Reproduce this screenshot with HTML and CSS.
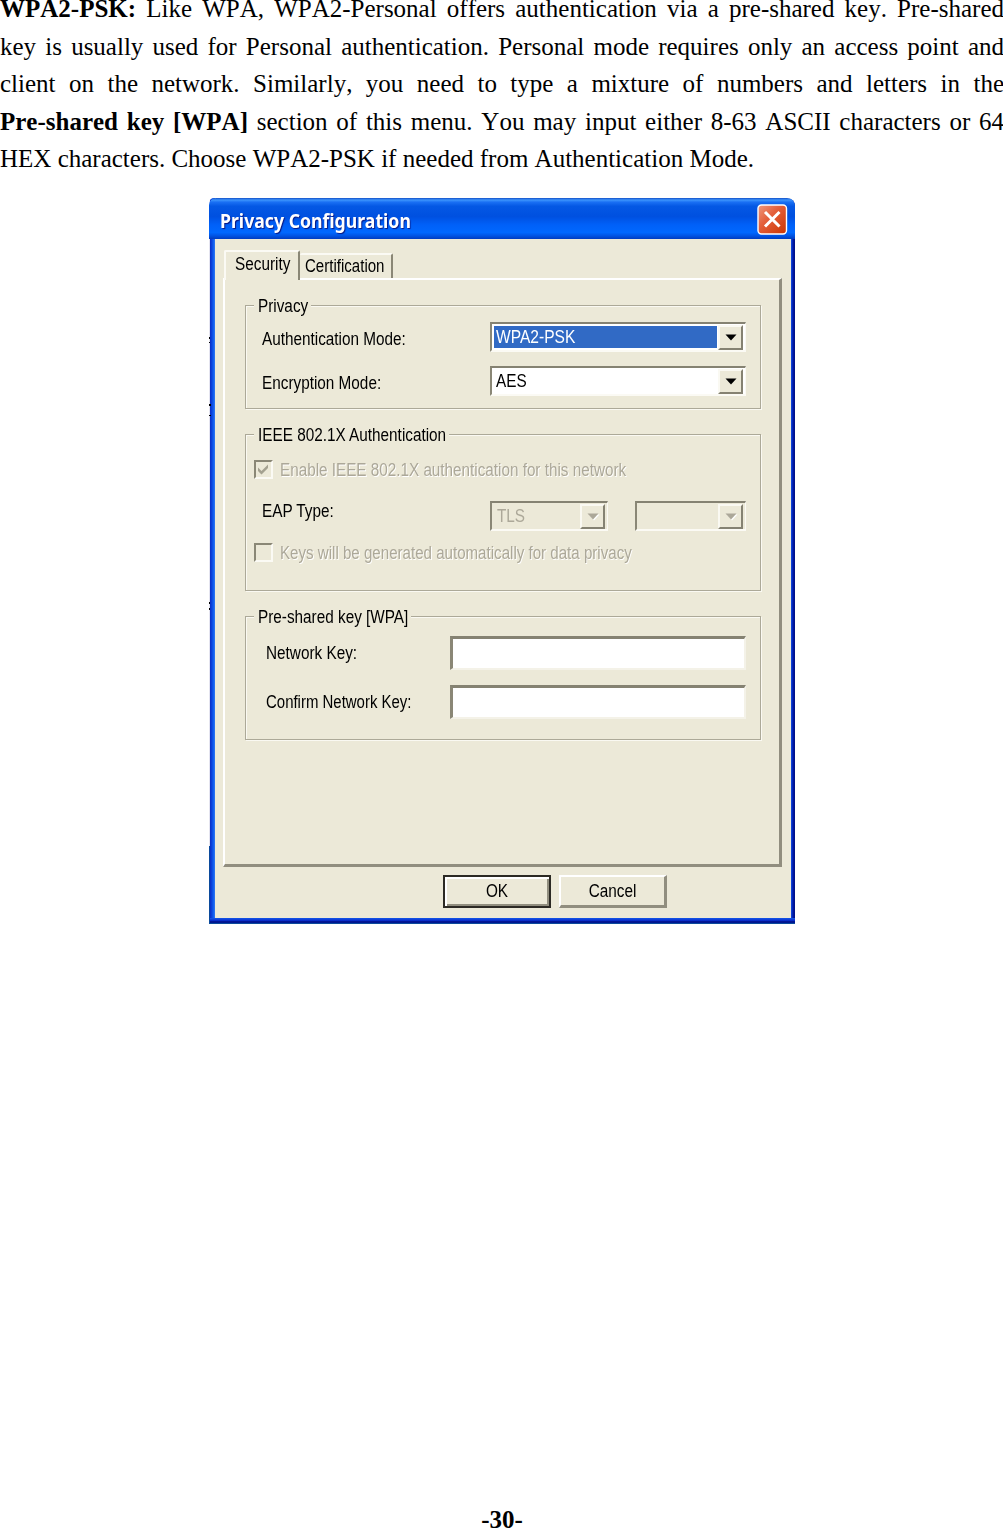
FILE: index.html
```
<!DOCTYPE html>
<html lang="en">
<head>
  <meta charset="UTF-8" />
  <meta name="viewport" content="width=device-width, initial-scale=1.0"/>
  <title>WPA2-PSK</title>
  <link rel="stylesheet" href="styles.css">
</head>
<body>
  <p class="intro">
    <span class="line"><b>WPA2-PSK:</b> Like WPA, WPA2-Personal offers authentication via a pre-shared key. Pre-shared</span>
    <span class="line">key is usually used for Personal authentication. Personal mode requires only an access point and</span>
    <span class="line">client on the network. Similarly, you need to type a mixture of numbers and letters in the</span>
    <span class="line"><b>Pre-shared key [WPA]</b> section of this menu. You may input either 8-63 ASCII characters or 64</span>
    <span class="line last">HEX characters. Choose WPA2-PSK if needed from Authentication Mode.</span>
  </p>

  <div class="dialog">
    <div class="titlebar">
      <span class="title">Privacy Configuration</span>
      <div class="close">
        <svg width="31" height="31" viewBox="0 0 31 31">
          <defs>
            <linearGradient id="red" x1="0" y1="0" x2="1" y2="1">
              <stop offset="0" stop-color="#ee9a80"/>
              <stop offset="0.4" stop-color="#e4603c"/>
              <stop offset="1" stop-color="#cc3400"/>
            </linearGradient>
          </defs>
          <rect x="1" y="1" width="28.5" height="29" rx="3.5" fill="url(#red)" stroke="#fff" stroke-width="1.4"/>
          <path d="M8 8 L22.5 22.5 M22.5 8 L8 22.5" stroke="#fff" stroke-width="3"/>
        </svg>
      </div>
    </div>

    <div class="content">
      <div class="tabs">
        <div class="tab active"><span class="t">Security</span></div>
        <div class="tab"><span class="t t-cert">Certification</span></div>
      </div>

      <div class="panel">
        <div class="group privacy">
          <div class="legend l-privacy"><span class="t">Privacy</span></div>
          <div class="row">
            <label class="t">Authentication Mode:</label>
            <div class="combo selected"><div class="value"><span class="t t-wpa2">WPA2-PSK</span></div><div class="arrow"><svg width="12" height="7"><path d="M0.5 0.5h11L6 6.5z"/></svg></div></div>
          </div>
          <div class="row">
            <label class="t">Encryption Mode:</label>
            <div class="combo"><div class="value"><span class="t">AES</span></div><div class="arrow"><svg width="12" height="7"><path d="M0.5 0.5h11L6 6.5z"/></svg></div></div>
          </div>
        </div>

        <div class="group ieee">
          <div class="legend l-ieee"><span class="t">IEEE 802.1X Authentication</span></div>
          <div class="check">
            <div class="box"><svg width="14" height="14"><path d="M2 5.5 L5.5 9 L12 2.5 V6 L5.5 12.5 L2 9z"/></svg></div>
            <span class="t t-enable">Enable IEEE 802.1X authentication for this network</span>
          </div>
          <div class="row eap">
            <label class="t">EAP Type:</label>
            <div class="combo disabled tls"><div class="value"><span class="t">TLS</span></div><div class="arrow"><svg width="12" height="7"><path d="M0.5 0.5h11L6 6.5z"/></svg></div></div>
            <div class="combo disabled blank"><div class="value"></div><div class="arrow"><svg width="12" height="7"><path d="M0.5 0.5h11L6 6.5z"/></svg></div></div>
          </div>
          <div class="check">
            <div class="box"></div>
            <span class="t t-keys">Keys will be generated automatically for data privacy</span>
          </div>
        </div>

        <div class="group psk">
          <div class="legend l-psk"><span class="t">Pre-shared key [WPA]</span></div>
          <div class="row">
            <label class="t">Network Key:</label>
            <div class="field"></div>
          </div>
          <div class="row">
            <label class="t t-confirm">Confirm Network Key:</label>
            <div class="field"></div>
          </div>
        </div>
      </div>

      <div class="buttons">
        <div class="btn default"><span class="t">OK</span></div>
        <div class="btn"><span class="t">Cancel</span></div>
      </div>
    </div>
  </div>

  <div class="page-number">-30-</div>
</body>
</html>
```
FILE: styles.css
```
* {
  margin: 0;
  padding: 0;
  box-sizing: border-box;
}

body {
  width: 1003px;
  height: 1528px;
  overflow: hidden;
  display: flex;
  flex-direction: column;
  background: #fff;
  color: #000;
  font-family: "Liberation Serif", "Times New Roman", serif;
  font-size: 25px;
}

.intro {
  margin-top: -10px;
  margin-bottom: 20.5px;
  line-height: 37.5px;
  font-kerning: none;
}

.line {
  display: block;
  width: 1004px;
  white-space: nowrap;
  text-align: justify;
  text-align-last: justify;
}

.line.last {
  text-align-last: left;
}

/* dialog window */
.dialog {
  width: 586px;
  height: 726px;
  flex: none;
  margin-left: 209px;
  padding: 0 4px 6px 6px;
  border-radius: 5px 8px 0 0;
  background:
    linear-gradient(#0b4a9c, #0b4a9c) 0 100% / 1px 78px no-repeat,
    linear-gradient(#000, #000) 0 139px / 1px 2px no-repeat,
    linear-gradient(#000, #000) 0 144px / 1px 1px no-repeat,
    linear-gradient(#000, #000) 0 206px / 2px 2px no-repeat,
    linear-gradient(#000, #000) 0 217px / 2px 1px no-repeat,
    linear-gradient(#000, #000) 0 404px / 1px 2px no-repeat,
    linear-gradient(#000, #000) 0 410px / 1px 2px no-repeat,
    linear-gradient(#1458e8, #0a30d0 40%, #001590 60%, #001590 83%, #0b4a9c 84%) 0 100% / 100% 6px no-repeat,
    linear-gradient(90deg, #e4e4f0 1px, #0a2cc4 1px, #0b46e0 3px, #1668f4 5px, #3c78ec 6px) 0 0 / 6px 100% no-repeat,
    linear-gradient(90deg, #1250e4, #0018a8 50%, #001080) 100% 0 / 4px 100% no-repeat;
}

.titlebar {
  height: 41px;
  margin: 0 -4px 0 -6px;
  padding: 0 7px 0 11px;
  display: flex;
  justify-content: space-between;
  border-radius: 7px 8px 0 0;
  background: linear-gradient(#1450c8 0, #3c94fc 5%, #1a70f4 10%, #0458e4 20%, #0050e0 45%, #0060f8 65%, #0068ff 84%, #0054e4 92%, #003cc0 100%);
}

.title {
  display: inline-block;
  margin-top: 10px;
  height: 26px;
  line-height: 26px;
  font-family: "Noto Sans", sans-serif;
  font-size: 19px;
  font-weight: bold;
  color: #fff;
  text-shadow: 1px 1px 1px #0a1883;
  white-space: nowrap;
  transform: scaleX(0.93);
  transform-origin: 0 0;
}

.close {
  margin-top: 6px;
}

.close svg {
  display: block;
}

.content {
  height: 679px;
  padding: 10px 9px 0 8px;
  background: #ece9d8;
}

/* squeezed text, close to the proportions of a bitmap system font */
.t {
  display: inline-block;
  font-family: "Liberation Sans", Arial, sans-serif;
  font-size: 17.5px;
  line-height: 20px;
  white-space: nowrap;
  transform: scaleX(0.875);
  transform-origin: 0 0;
}

.t-cert { transform: scaleX(0.86); }
.t-wpa2 { transform: scaleX(0.89); }
.t-enable { transform: scaleX(0.872); }
.t-keys { transform: scaleX(0.863); }
.t-confirm { transform: scaleX(0.855); }

/* tabs */
.tabs {
  display: flex;
  align-items: flex-end;
  height: 29px;
  padding-left: 1px;
}

.tab {
  width: 93px;
  height: 25px;
  padding: 1px 0 0 5px;
  border-top: 2px solid #fbfaf4;
  border-right: 2px solid #8a8776;
  border-radius: 2px 2px 0 0;
}

.tab.active {
  position: relative;
  width: 76px;
  height: 30px;
  margin-bottom: -2px;
  padding: 2px 0 0 9px;
  border-left: 2px solid #fbfaf4;
  background: #ece9d8;
}

.tab .t {
  display: block;
}

.panel {
  height: 589px;
  padding: 25px 19px 0 20px;
  border: 2px solid #fff;
  border-right: 3px solid #918e7f;
  border-bottom: 3px solid #918e7f;
}

/* group boxes */
.group {
  position: relative;
  width: 516px;
  border: 1px solid #aca998;
  box-shadow: 1px 1px 0 0 #faf9f2, inset 1px 1px 0 #faf9f2;
}

.legend {
  position: absolute;
  top: -10px;
  left: 8px;
  height: 20px;
  padding-left: 4px;
  background: #ece9d8;
}

.legend .t {
  display: block;
}

.l-privacy { width: 57px; }
.l-ieee { width: 195px; }
.l-psk { width: 157px; }

.row {
  display: flex;
  justify-content: space-between;
}

.privacy {
  height: 104px;
  padding: 16px 14px 0 16px;
}

.privacy .row {
  height: 44px;
}

.privacy label {
  margin-top: 7px;
}

.combo {
  display: flex;
  width: 256px;
  height: 30px;
  padding: 1px 2px 2px 2px;
  border: 2px solid #8a8776;
  border-top-color: #858272;
  border-right: 1px solid #fbfaf4;
  border-bottom: 2px solid #fbfaf4;
  background: #fff;
}

.combo .value {
  flex: 1;
  height: 22px;
  margin-top: 1px;
  padding-left: 2px;
}

.combo .value .t {
  display: block;
  line-height: 23px;
}

.selected .value {
  background: #316ac5;
  color: #fff;
}

.arrow {
  display: flex;
  align-items: center;
  justify-content: center;
  width: 25px;
  height: 25px;
  margin-left: 1px;
  border: 2px solid #faf9f2;
  border-right-color: #858272;
  border-bottom-color: #858272;
  background: #ece9d8;
}

.combo.disabled {
  background: #ece9d8;
  color: #aca899;
}

.disabled .value {
  padding-left: 3px;
}

.disabled .arrow svg {
  fill: #aca899;
  filter: drop-shadow(1px 1px 0 #fff);
}

.ieee {
  height: 157px;
  margin-top: 25px;
  padding: 25px 14px 0 8px;
}

.check {
  display: flex;
  height: 20px;
  color: #aca899;
}

.check .t {
  margin-left: 7px;
  text-shadow: 1px 1px 0 #fff;
}

.box {
  width: 19px;
  height: 19px;
  border: 2px solid #8a8776;
  border-right-color: #fbfaf4;
  border-bottom-color: #fbfaf4;
}

.box svg {
  display: block;
  fill: #a4a190;
}

.eap {
  height: 63px;
  padding: 21px 0 0 8px;
}

.eap .tls {
  width: 118px;
  margin-right: 27px;
}

.eap .blank {
  width: 111px;
}

.eap label {
  flex: 1;
}

.psk {
  height: 124px;
  margin-top: 25px;
  padding: 19px 14px 0 20px;
}

.psk .row {
  height: 49px;
}

.psk label {
  margin-top: 7px;
}

.field {
  width: 296px;
  height: 34px;
  border: 3px solid #8a8776;
  border-top-color: #858272;
  border-right: 2px solid #f4f2e8;
  border-bottom: 2px solid #f4f2e8;
  background: #fff;
}

/* bottom buttons */
.buttons {
  display: flex;
  gap: 8px;
  padding: 8px 0 0 220px;
}

.btn {
  width: 108px;
  height: 33px;
  padding-top: 4px;
  border: 2px solid #fff;
  border-right: 3px solid #918e7f;
  border-bottom: 3px solid #918e7f;
  text-align: center;
  line-height: 20px;
}

.btn.default {
  border: 2px solid #2c2a24;
  box-shadow: inset 2px 2px 0 #fff, inset -2px -2px 0 #918e7f;
}

.btn .t {
  display: block;
  transform-origin: 50% 0;
}

.page-number {
  margin-top: auto;
  padding-left: 1px;
  height: 22px;
  line-height: 28px;
  text-align: center;
  font-weight: bold;
}
```
